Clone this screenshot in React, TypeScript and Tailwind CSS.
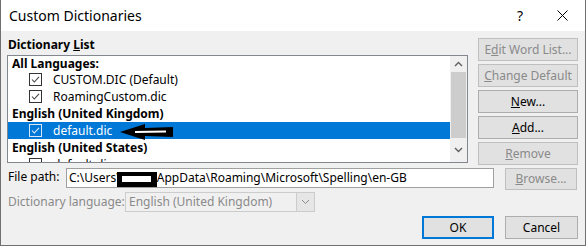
import React from 'react';

const font = { fontFamily: '"Segoe UI", "Noto Sans", sans-serif' };

function Check({ selected = false, checked = true }: { selected?: boolean; checked?: boolean }) {
  const stroke = selected ? '#d8e6f5' : '#333333';
  return (
    <svg width="13" height="13" viewBox="0 0 13 13" className="shrink-0">
      <rect x="0.5" y="0.5" width="12" height="12" fill={selected ? 'none' : '#ffffff'} stroke={stroke} />
      {checked && <path d="M3 6.5 L5.3 9 L10 3.8" fill="none" stroke={selected ? '#e6eef8' : '#444444'} strokeWidth="1.1" />}
    </svg>
  );
}

function Btn({ children, disabled = false, className = '' }: { children: React.ReactNode; disabled?: boolean; className?: string }) {
  return (
    <div
      className={`flex items-center justify-center bg-[#e1e1e1] border text-[12px] ${
        disabled ? 'border-[#bfbfbf] text-[#8a8a8a]' : 'border-[#adadad] text-black'
      } ${className}`}
    >
      {children}
    </div>
  );
}

function Header({ children, h = 'h-[17px]' }: { children: React.ReactNode; h?: string }) {
  return <div className={`${h} flex items-center pl-[4px] font-bold text-[12px] text-black`}>{children}</div>;
}

function Item({ name, selected = false, checked = true }: { name: string; selected?: boolean; checked?: boolean }) {
  return (
    <div className={`h-[17px] flex items-center pl-[21px] text-[12px] ${selected ? 'bg-[#0078d7] text-white' : 'text-black'}`}>
      <Check selected={selected} checked={checked} />
      <span className="ml-[11px]">{name}</span>
    </div>
  );
}

export default function App() {
  return (
    <div style={font} className="w-[586px] h-[246px] bg-[#f0f0f0] border-l border-r border-b border-[#707070] flex flex-col overflow-hidden">
      {/* title bar */}
      <div className="h-[31px] shrink-0 bg-white flex items-center pl-[8px] pr-[17px]">
        <span className="text-[14px] text-black">Custom Dictionaries</span>
        <span className="ml-auto text-[14px] text-black mr-[34px]">?</span>
        <svg width="11" height="11" viewBox="0 0 11 11">
          <path d="M0.5 0.5 L10.5 10.5 M10.5 0.5 L0.5 10.5" stroke="#000" strokeWidth="1" />
        </svg>
      </div>

      <div className="flex-1 flex flex-col pl-[6px] pr-[7px]">
        <div className="flex gap-[10px]">
          {/* left column */}
          <div className="w-[461px] pt-[6px]">
            <div className="h-[18px] pl-[1px] text-[12px] font-bold leading-[16px] text-black">
              Dictionary <span className="underline">L</span>ist
            </div>
            <div className="relative h-[108px] border border-[#828790] bg-white flex">
              <div className="flex-1 flex flex-col overflow-hidden">
                <Header h="h-[15px]">All Languages:</Header>
                <Item name="CUSTOM.DIC (Default)" />
                <Item name="RoamingCustom.dic" />
                <Header>English (United Kingdom)</Header>
                <Item name="default.dic" selected />
                <Header>English (United States)</Header>
                <Item name="default.dic" checked={false} />
              </div>
              {/* scrollbar */}
              <div className="w-[17px] bg-[#f0f0f0] flex flex-col">
                <div className="h-[16px] flex items-center justify-center">
                  <svg width="9" height="6" viewBox="0 0 9 6">
                    <path d="M1 5 L4.5 1.5 L8 5" fill="none" stroke="#606060" strokeWidth="1.4" />
                  </svg>
                </div>
                <div className="h-[66px] mx-[1px] bg-[#cdcdcd]" />
                <div className="flex-1 flex items-center justify-center">
                  <svg width="9" height="6" viewBox="0 0 9 6">
                    <path d="M1 1 L4.5 4.5 L8 1" fill="none" stroke="#606060" strokeWidth="1.4" />
                  </svg>
                </div>
              </div>
              {/* annotation arrow */}
              <svg className="absolute left-[111px] top-[67px]" width="55" height="18" viewBox="0 0 55 18">
                <path d="M1 9 L26 1 L26 5 L54 4 L54 14 L26 13 L26 17 Z" fill="#000" />
                <path d="M16 9 L47 8.5" stroke="#fff" strokeWidth="2" />
              </svg>
            </div>
          </div>

          {/* right buttons */}
          <div className="w-[100px] pt-[7px] flex flex-col gap-[3px]">
            <Btn disabled className="h-[23px]">E<span className="underline">d</span>it Word List...</Btn>
            <Btn disabled className="h-[23px]"><span className="underline">C</span>hange Default</Btn>
            <Btn className="h-[23px]"><span className="underline">N</span>ew...</Btn>
            <Btn className="h-[23px]"><span className="underline">A</span>dd...</Btn>
            <Btn disabled className="h-[23px]"><span className="underline">R</span>emove</Btn>
          </div>
        </div>

        {/* file path */}
        <div className="mt-[3px] flex items-start h-[22px]">
          <div className="w-[59px] pl-[1px] text-[12px] text-black leading-[18px]">File path:</div>
          <div className="w-[428px] h-[20px] border border-[#a0a0a0] bg-white flex items-center pl-[2px] text-[12px] text-black whitespace-nowrap">
            <span>C:\Users\</span>
            <span className="inline-block relative w-[40px] h-[15px] bg-black -ml-[4px] mt-[2px]">
              <span className="absolute left-[5px] top-[4px] w-[29px] h-[6px] bg-white" />
            </span>
            <span>AppData\Roaming\Microsoft\Spelling\en-GB</span>
          </div>
          <Btn disabled className="ml-[11px] w-[72px] h-[22px]"><span className="underline">B</span>rowse...</Btn>
        </div>

        {/* dictionary language */}
        <div className="mt-[2px] flex items-center h-[20px]">
          <div className="w-[118px] pl-[1px] text-[12px] text-[#8a8a8a]">Dictionary language:</div>
          <div className="w-[190px] h-[20px] border border-[#cccccc] flex">
            <div className="flex-1 flex items-center pl-[3px] text-[12px] text-[#8a8a8a]">English (United Kingdom)</div>
            <div className="w-[18px] bg-[#e6e6e6] border-l border-[#cccccc] flex items-center justify-center">
              <svg width="9" height="6" viewBox="0 0 9 6">
                <path d="M1 1 L4.5 4.5 L8 1" fill="none" stroke="#8a8a8a" strokeWidth="1" />
              </svg>
            </div>
          </div>
        </div>

        {/* OK / Cancel */}
        <div className="mt-[4px] flex justify-end gap-[11px]">
          <div className="w-[72px] h-[23px] border-2 border-[#0078d7] bg-[#e1e1e1] flex items-center justify-center text-[12px] text-black">OK</div>
          <Btn className="w-[73px] h-[23px]">Cancel</Btn>
        </div>
      </div>
    </div>
  );
}
